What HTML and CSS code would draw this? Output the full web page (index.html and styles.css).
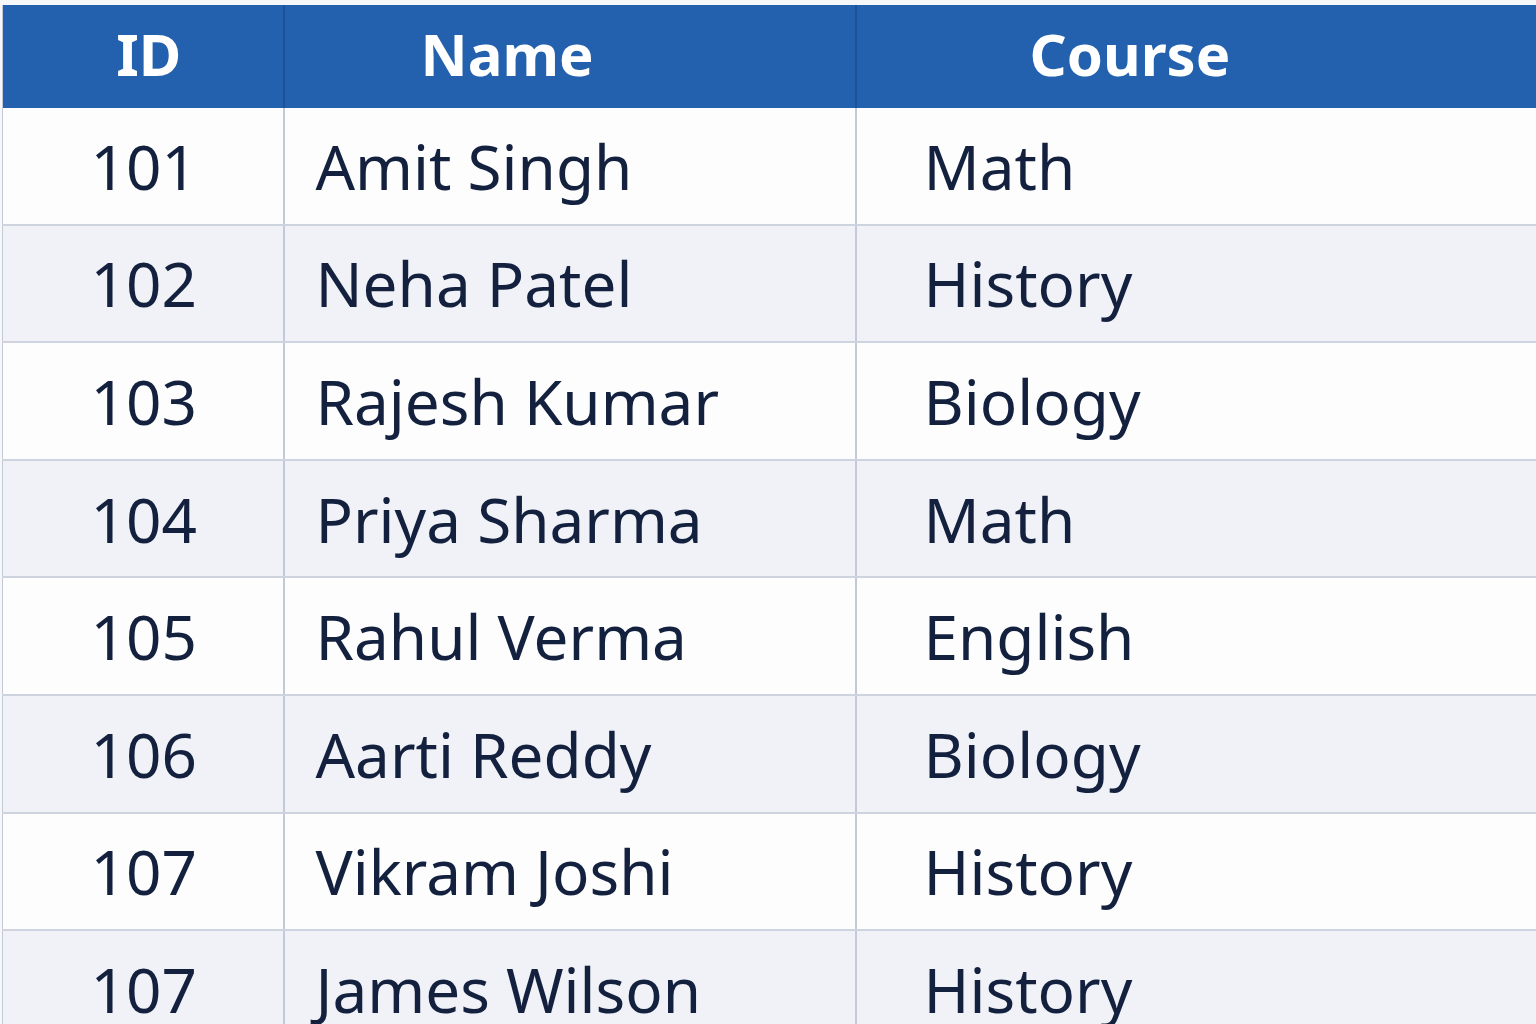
FILE: index.html
```html
<!DOCTYPE html>
<html>
<head>
<meta charset="utf-8">
<link rel="stylesheet" href="styles.css">
</head>
<body>
<div class="wrap">
<table class="grid">
  <colgroup>
    <col class="c-id">
    <col class="c-name">
    <col class="c-course">
  </colgroup>
  <thead>
    <tr>
      <th class="h-id">ID</th>
      <th class="h-name">Name</th>
      <th class="h-course">Course</th>
    </tr>
  </thead>
  <tbody>
    <tr><td class="id">101</td><td class="name">Amit Singh</td><td class="course">Math</td></tr>
    <tr><td class="id">102</td><td class="name">Neha Patel</td><td class="course">History</td></tr>
    <tr><td class="id">103</td><td class="name">Rajesh Kumar</td><td class="course">Biology</td></tr>
    <tr><td class="id">104</td><td class="name">Priya Sharma</td><td class="course">Math</td></tr>
    <tr><td class="id">105</td><td class="name">Rahul Verma</td><td class="course">English</td></tr>
    <tr><td class="id">106</td><td class="name">Aarti Reddy</td><td class="course">Biology</td></tr>
    <tr><td class="id">107</td><td class="name">Vikram Joshi</td><td class="course">History</td></tr>
    <tr><td class="id">107</td><td class="name">James Wilson</td><td class="course">History</td></tr>
  </tbody>
</table>
</div>
</body>
</html>
```
FILE: styles.css
```css
html, body {
  margin: 0;
  padding: 0;
  background: #f6f7f9;
  overflow: hidden;
  height: 1024px;
}
.wrap {
  padding-top: 5px;
  padding-left: 2px;
}
.grid {
  border-collapse: collapse;
  table-layout: fixed;
  width: 1534px;
  font-family: "Noto Sans", "Open Sans", sans-serif;
  color: #13213f;
  border-left: 1px solid #c3c9d6;
}
.c-id { width: 281px; }
.c-name { width: 572px; }
.c-course { width: 681px; }
thead tr {
  background: #2360ad;
}
th {
  height: 97px;
  padding: 0 0 6px 0;
  color: #ffffff;
  font-weight: 700;
  font-size: 58px;
  text-align: left;
  border-right: 2px solid #1d5298;
  vertical-align: middle;
}
th:last-child { border-right: none; }
.h-id { text-align: center; padding-left: 12px; }
.h-name { padding-left: 136px; }
.h-course { padding-left: 173px; }
tbody tr {
  background: #fdfdfe;
}
tbody tr:nth-child(even) {
  background: #f1f2f7;
}
td {
  height: 115.6px;
  padding: 0;
  font-size: 62px;
  border-bottom: 2px solid #cdd3df;
  border-right: 2px solid #c3c9d6;
  vertical-align: middle;
  white-space: nowrap;
}
td:last-child { border-right: none; }
td.id { text-align: center; padding-left: 2px; }
td.name { padding-left: 31px; }
td.course { padding-left: 67px; }
```
